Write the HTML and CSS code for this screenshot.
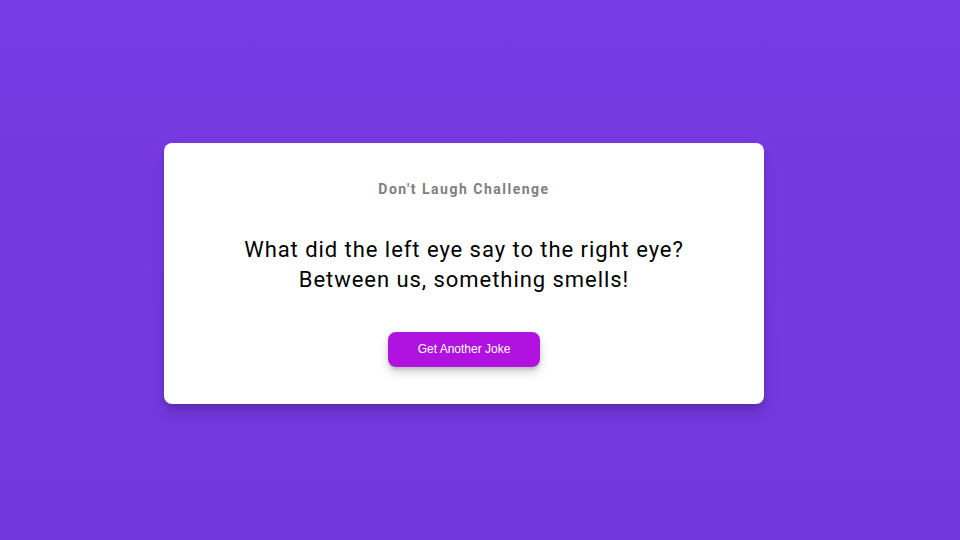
FILE: index.html
```html
<!DOCTYPE html>
<html lang="en">
<head>
<meta charset="utf-8">
<title>Don't Laugh Challenge</title>
<link rel="stylesheet" href="styles.css">
</head>
<body>
<div class="card">
  <h3 class="title">Don't Laugh Challenge</h3>
  <div class="joke">What did the left eye say to the right eye? Between us, something smells!</div>
  <button class="btn">Get Another Joke</button>
</div>
</body>
</html>
```
FILE: styles.css
```css
* { box-sizing: border-box; }
html, body { height: 100%; }
body {
  margin: 0;
  padding: 7px 32px 0 0;
  background: linear-gradient(180deg, #783ae2 0%, #7238dd 100%);
  font-family: Roboto, "Liberation Sans", sans-serif;
  display: flex;
  align-items: center;
  justify-content: center;
}
.card {
  width: 600px;
  background: #fff;
  border-radius: 8px;
  box-shadow: 0 8px 16px rgba(0,0,0,0.12), 0 5px 5px rgba(0,0,0,0.1);
  padding: 38px 20px 37px;
  text-align: center;
}
.title {
  margin: 0;
  font-size: 14px;
  line-height: 16px;
  font-weight: 700;
  letter-spacing: 1.5px;
  color: #808080;
}
.joke {
  max-width: 480px;
  margin: 38px auto 37px;
  font-size: 22px;
  line-height: 30px;
  letter-spacing: 0.95px;
  color: #000;
}
.btn {
  display: block;
  margin: 0 auto;
  border: 0;
  border-radius: 8px;
  background: #b013e0;
  color: #fff;
  font-family: "Liberation Sans", Arial, sans-serif;
  font-size: 12px;
  line-height: 14px;
  padding: 0 0 2px;
  width: 152px;
  height: 35px;
  white-space: nowrap;
  box-shadow: 0 5px 10px rgba(0,0,0,0.18), 0 3px 3px rgba(0,0,0,0.1);
  cursor: pointer;
}
```
